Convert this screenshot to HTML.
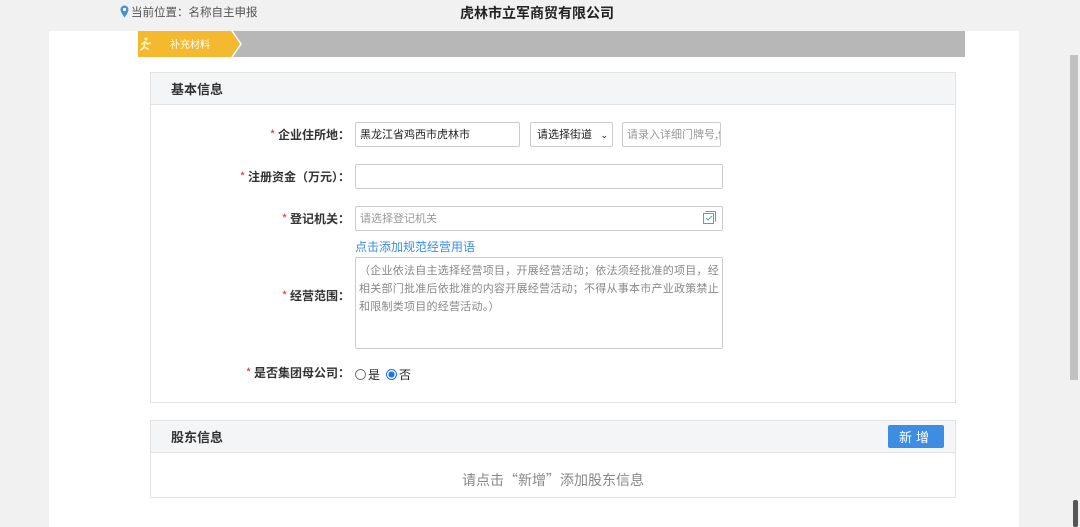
<!DOCTYPE html>
<html><head><meta charset="utf-8"><style>
*{margin:0;padding:0;box-sizing:border-box}
body{width:1080px;height:527px;background:#f1f1f1;font-family:"Noto Sans CJK SC","Liberation Sans",sans-serif;position:relative;overflow:hidden;color:#333}
.abs{position:absolute}
.main{left:49px;top:31px;width:970px;height:496px;background:#fff}
.bar{left:138px;top:31px;width:827px;height:26px;background:#b7b7b7}
.panel{background:#fff;border:1px solid #e3e3e3}
.ph{height:32px;background:#f4f5f7;border-bottom:1px solid #e3e3e3;font-size:13px;font-weight:bold;color:#333;padding-left:20px;line-height:32px}
.lbl{font-size:12px;font-weight:bold;color:#333;text-align:right;width:200px;line-height:16px}
.lbl b{color:#e33;font-weight:normal}
.inp{border:1px solid #ccc;border-radius:2px;background:#fff;font-size:11px;padding-left:4px;line-height:23px}
</style></head><body>
<svg class="abs" style="left:120px;top:5px" width="9" height="13" viewBox="0 0 9 13"><path d="M4.5 0.5a4 4 0 0 1 4 4c0 3-4 8-4 8s-4-5-4-8a4 4 0 0 1 4-4z" fill="#4a90d9"/><circle cx="4.5" cy="4.5" r="1.6" fill="#fff"/></svg>
<div class="abs" style="left:131px;top:4px;font-size:11.5px;color:#555">当前位置：名称自主申报</div>
<div class="abs" style="left:460px;top:3px;font-size:14px;font-weight:bold;color:#222">虎林市立军商贸有限公司</div>
<div class="abs main"></div>
<div class="abs bar"></div>
<svg class="abs" style="left:138px;top:31px" width="106" height="26"><polygon points="0,0 94,0 103,13 94,26 0,26" fill="#f4b92f"/><polyline points="94,0 103,13 94,26" fill="none" stroke="#fff" stroke-width="1.5"/><g stroke="#fff3b0" stroke-width="1.8" fill="none" stroke-linecap="round"><circle cx="8" cy="8" r="1.6" fill="#fff3b0" stroke="none"/><path d="M7 11l-1 5 -3 3M6 16l4 2M7 11l3 2 2-1M7 11l-3 2"/></g></svg>
<div class="abs" style="left:170px;top:38px;font-size:10px;color:#fff;line-height:12px">补充材料</div>
<div class="abs" style="left:1070px;top:55px;width:8px;height:325px;background:#c1c1c1"></div>
<div class="abs" style="left:1073px;top:500px;width:5px;height:27px;background:#555;border-radius:2px"></div>

<div class="abs panel" style="left:150px;top:72px;width:806px;height:331px"><div class="ph">基本信息</div></div>
<div class="abs lbl" style="left:150px;top:127px"><b>* </b>企业住所地：</div>
<div class="abs inp" style="left:355px;top:122px;width:165px;height:25px;color:#222">黑龙江省鸡西市虎林市</div>
<div class="abs inp" style="left:530px;top:122px;width:83px;height:25px;color:#222;padding-left:6px">请选择街道 <span style="font-size:9px;margin-left:6px">⌄</span></div>
<div class="abs inp" style="left:622px;top:122px;width:99px;height:25px;color:#999;overflow:hidden;white-space:nowrap">请录入详细门牌号,例</div>
<div class="abs lbl" style="left:150px;top:169px"><b>* </b>注册资金（万元）：</div>
<div class="abs inp" style="left:355px;top:164px;width:368px;height:25px"></div>
<div class="abs lbl" style="left:150px;top:211px"><b>* </b>登记机关：</div>
<div class="abs inp" style="left:355px;top:206px;width:368px;height:25px;color:#999">请选择登记机关</div>
<svg class="abs" style="left:703px;top:211px" width="13" height="13"><rect x="0.5" y="2.5" width="10" height="10" fill="none" stroke="#3fa8e0"/><path d="M2.5 0.5h10v10" fill="none" stroke="#3fa8e0"/><path d="M3 7l2 2 4-4" fill="none" stroke="#3fa8e0"/></svg>
<div class="abs" style="left:355px;top:238px;font-size:12px;color:#3a8ee6">点击添加规范经营用语</div>
<div class="abs lbl" style="left:150px;top:288px"><b>* </b>经营范围：</div>
<div class="abs inp" style="left:355px;top:257px;width:368px;height:92px;color:#888;font-size:11px;line-height:18px;padding:3px 3px;letter-spacing:0.25px">（企业依法自主选择经营项目，开展经营活动；依法须经批准的项目，经相关部门批准后依批准的内容开展经营活动；不得从事本市产业政策禁止和限制类项目的经营活动。）</div>
<div class="abs lbl" style="left:150px;top:365px"><b>* </b>是否集团母公司：</div>
<div class="abs" style="left:355px;top:366px;font-size:12px;color:#222;display:flex;align-items:center"><span style="width:11px;height:11px;border:1px solid #777;border-radius:50%;display:inline-block;margin-right:2px"></span>是<span style="width:11px;height:11px;border:1px solid #1a73e8;border-radius:50%;display:inline-block;margin:0 2px 0 6px;background:radial-gradient(#1a73e8 45%,#fff 50%)"></span>否</div>

<div class="abs panel" style="left:150px;top:420px;width:806px;height:78px"><div class="ph">股东信息</div></div>
<div class="abs" style="left:888px;top:425px;width:56px;height:23px;background:#3d8ee2;border-radius:2px;color:#fff;font-size:13px;text-align:center;line-height:23px;letter-spacing:4px">新增</div>
<div class="abs" style="left:150px;top:470px;width:806px;text-align:center;font-size:14px;color:#888">请点击“新增”添加股东信息</div>
</body></html>
